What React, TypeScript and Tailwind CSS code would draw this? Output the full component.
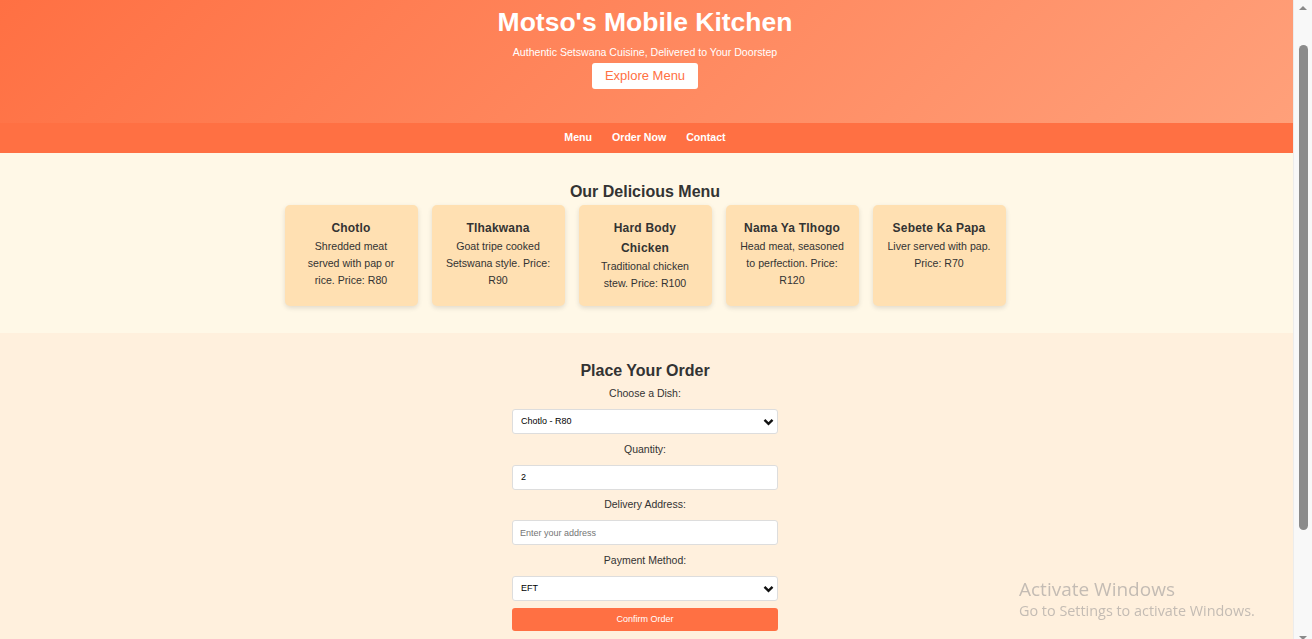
import React from 'react';

const dishes = [
  { name: 'Chotlo', desc: 'Shredded meat served with pap or rice. Price: R80' },
  { name: 'Tlhakwana', desc: 'Goat tripe cooked Setswana style. Price: R90' },
  { name: 'Hard Body Chicken', desc: 'Traditional chicken stew. Price: R100' },
  { name: 'Nama Ya Tlhogo', desc: 'Head meat, seasoned to perfection. Price: R120' },
  { name: 'Sebete Ka Papa', desc: 'Liver served with pap. Price: R70' },
];

const Chevron = () => (
  <svg className="pointer-events-none absolute right-[4px] top-1/2 -translate-y-1/2" width="11" height="8" viewBox="0 0 11 8">
    <path d="M1.5 1.8 L5.5 5.8 L9.5 1.8" fill="none" stroke="#111" strokeWidth="2.4" />
  </svg>
);

const Field: React.FC<{ label: string; children: React.ReactNode }> = ({ label, children }) => (
  <div className="flex flex-col items-center">
    <label className="text-[10.5px] leading-[14px] text-[#333] mb-[9px]">{label}</label>
    <div className="relative w-[266px]">{children}</div>
  </div>
);

const App: React.FC = () => {
  return (
    <div className="flex h-[639px] overflow-hidden" style={{ fontFamily: '"Liberation Sans", Arial, sans-serif' }}>
      <div className="flex-1 flex flex-col">
        {/* Header */}
        <header className="bg-[linear-gradient(135deg,#ff7043,#ffa07a)] text-white text-center pt-[5px] pb-[34px] pr-[3px] flex flex-col items-center">
          <h1 className="text-[26.5px] leading-[34px] font-bold">Motso's Mobile Kitchen</h1>
          <p className="text-[10.6px] leading-[14px] mt-[6px]">Authentic Setswana Cuisine, Delivered to Your Doorstep</p>
          <button className="mt-[4px] h-[26px] px-[13px] bg-white text-[#ff7043] text-[13px] rounded-[3px]">Explore Menu</button>
        </header>

        {/* Nav */}
        <nav className="h-[30px] bg-[#ff7043] pr-[3px] flex items-center justify-center gap-[20px] text-white text-[10.6px] font-bold">
          <a>Menu</a>
          <a>Order Now</a>
          <a>Contact</a>
        </nav>

        {/* Menu */}
        <section className="bg-[#fff8e7] pt-[29px] pb-[27px] pr-[3px] flex flex-col items-center">
          <h2 className="text-[16px] leading-[20px] font-bold text-[#333] mb-[3px]">Our Delicious Menu</h2>
          <div className="flex gap-[14px]">
            {dishes.map((d) => (
              <div key={d.name} className="w-[133px] h-[101px] bg-[#ffe0b2] rounded-[5px] shadow-[0_2px_5px_rgba(0,0,0,0.12)] px-[14px] pt-[13px] text-center text-[#333]">
                <h3 className="text-[12px] leading-[20px] font-bold tracking-[0.2px]">{d.name}</h3>
                <p className="text-[10.6px] leading-[17px]">{d.desc}</p>
              </div>
            ))}
          </div>
        </section>

        {/* Order */}
        <section className="flex-1 bg-[#fff0dd] pt-[28px] pr-[3px] flex flex-col items-center">
          <h2 className="text-[16px] leading-[20px] font-bold text-[#333] mb-[5px]">Place Your Order</h2>
          <div className="flex flex-col gap-[7.7px]">
            <Field label="Choose a Dish:">
              <select className="block appearance-none w-full h-[25px] bg-white border border-[#ddd] rounded-[3px] pl-[8px] text-[9px] text-black" defaultValue="chotlo">
                <option value="chotlo">Chotlo - R80</option>
              </select>
              <Chevron />
            </Field>
            <Field label="Quantity:">
              <input className="block w-full h-[25px] bg-white border border-[#ddd] rounded-[3px] pl-[8px] text-[9px] text-black" defaultValue="2" />
            </Field>
            <Field label="Delivery Address:">
              <input className="block w-full h-[25px] bg-white border border-[#ddd] rounded-[3px] pl-[7px] text-[9px] text-black placeholder:text-[#757575]" placeholder="Enter your address" />
            </Field>
            <Field label="Payment Method:">
              <select className="block appearance-none w-full h-[25px] bg-white border border-[#ddd] rounded-[3px] pl-[8px] text-[9px] text-black" defaultValue="eft">
                <option value="eft">EFT</option>
              </select>
              <Chevron />
            </Field>
          </div>
          <button className="mt-[7px] w-[266px] h-[23px] bg-[#ff7043] text-white text-[9px] rounded-[3px]">Confirm Order</button>
        </section>
      </div>

      {/* scrollbar */}
      <div className="w-[19px] bg-[#f8f8f8] border-l border-[#ececec] flex flex-col items-center">
        <div className="mt-[6px] w-0 h-0 border-l-[4px] border-r-[4px] border-b-[4px] border-l-transparent border-r-transparent border-b-[#8a8a8a]" />
        <div className="mt-[35px] w-[9px] h-[485px] rounded-full bg-[#8b8b8b]" />
        <div className="mt-auto mb-[-1px] w-0 h-0 border-l-[4px] border-r-[4px] border-t-[4px] border-l-transparent border-r-transparent border-t-[#8a8a8a]" />
      </div>

      {/* OS watermark */}
      <div className="fixed left-[1019px] top-[577px] text-[#c4bcb4] pointer-events-none" style={{ fontFamily: '"Open Sans", "Noto Sans", sans-serif' }}>
        <div className="text-[19px] leading-[24px]">Activate Windows</div>
        <div className="text-[14.4px] leading-[20px]">Go to Settings to activate Windows.</div>
      </div>
    </div>
  );
};

export default App;
